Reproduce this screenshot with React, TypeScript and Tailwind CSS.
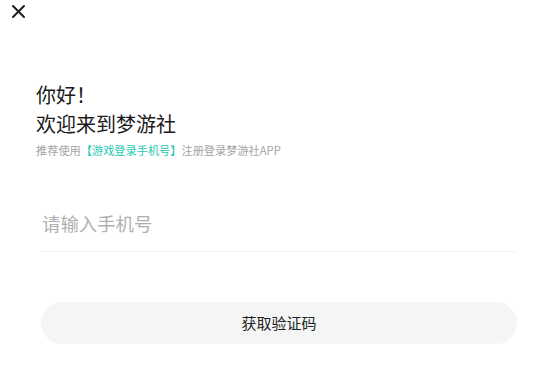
import React from "react";

export default function App() {
  return (
    <div
      className="w-[558px] h-[388px] bg-white relative overflow-hidden"
      style={{ fontFamily: '"Noto Sans CJK SC", "Noto Sans", sans-serif' }}
    >
      <div className="pl-[11px] pt-[4px] h-[20px]">
        <svg width="15" height="15" viewBox="0 0 15 15" fill="none">
          <path d="M2 2L13 13M13 2L2 13" stroke="#1f1f1f" strokeWidth="2" strokeLinecap="round" />
        </svg>
      </div>
      <div className="pl-[36px] pt-[60px]">
        <div className="text-[20px] leading-[29px] text-[#1a1a1a]">你好！</div>
        <div className="text-[20px] leading-[29px] text-[#1a1a1a]">欢迎来到梦游社</div>
        <div className="text-[11.2px] leading-[16px] mt-[4px] text-[#a3a3a3]">
          推荐使用<span className="text-[#1fc9b3]">【游戏登录手机号】</span>注册登录梦游社APP
        </div>
      </div>
      <div className="px-[41px] mt-[52px]">
        <div className="border-b border-[#f1f3f3] pb-[15px] pl-[1px]">
          <div className="text-[18.4px] leading-[26px] text-[#b0b0b0]">请输入手机号</div>
        </div>
        <div className="mt-[50px] h-[42px] rounded-full bg-[#f4f6f6] flex items-center justify-center text-[15px] text-[#222]">
          获取验证码
        </div>
      </div>
    </div>
  );
}
